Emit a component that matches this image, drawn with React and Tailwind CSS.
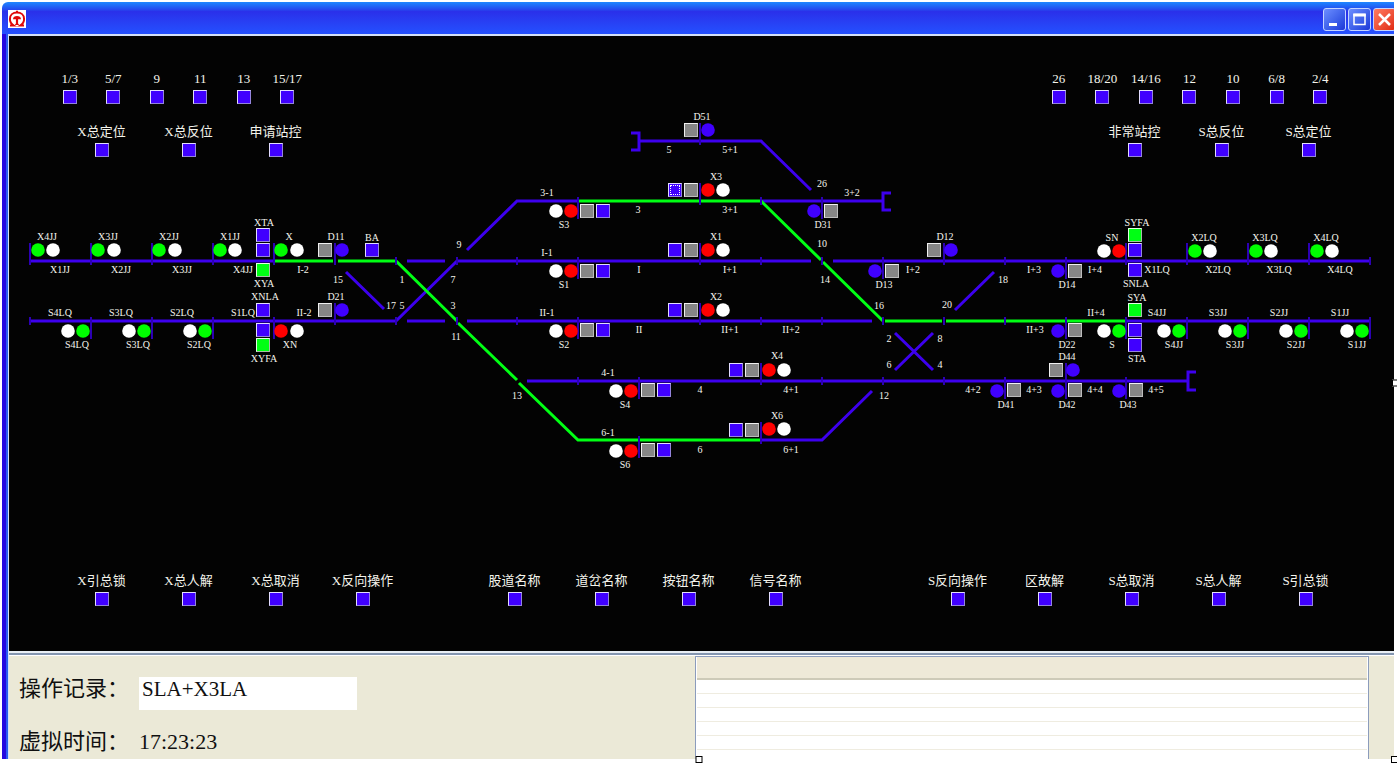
import React from "react";

const ORIGIN = { x: 9, y: 36 };
const place = (x, y) => ({ left: x - ORIGIN.x, top: y - ORIGIN.y });

const BLUE = "#3d00ee";
const GREEN = "#00ff14";

const LAMP = { g: "#00ff00", w: "#ffffff", r: "#ff0000", b: "#4000ff" };

const BUTTON_TONE = {
  blue: "bg-[#4000ff] border-t-[#e2dcff] border-l-[#e2dcff] border-r-[#9484dc] border-b-[#9484dc]",
  gray: "bg-[#868686] border-t-[#f0f0f0] border-l-[#f0f0f0] border-r-[#bcbcbc] border-b-[#bcbcbc]",
  green: "bg-[#00ff14] border-t-[#e4ffe4] border-l-[#e4ffe4] border-r-[#a8bca8] border-b-[#a8bca8]",
};

const blueTracks = [
  "M640 141H761L811 190",
  "M631 133H639V150H631",
  "M467 250L517 201H578",
  "M762 201H883",
  "M891 193H883V210H891",
  "M30 261H274",
  "M407 261H445",
  "M396 321L457 261H811",
  "M833 261H1370",
  "M346 272L384 309",
  "M30 321H396",
  "M407 321H445",
  "M467 321H872",
  "M1127 321H1370",
  "M527 381H1188",
  "M1196 372H1188V390H1196",
  "M761 440H822L872 391",
  "M895 333L933 370",
  "M895 370L933 333",
  "M955 310L994 272",
];

const greenTracks = [
  "M579 201H761L821 260",
  "M823 262L883 321",
  "M275 261H333",
  "M338 261H396L457 321",
  "M458 323L517 380",
  "M519 383L578 440H761",
  "M885 321H942",
  "M946 321H1126",
];

const range = (y, xs, from, to) => xs.map((x) => [x, y + from, y + to]);
const UP = [-18, 4];
const DOWN = [-4, 18];
const SHORT = [-4, 4];
const joints = [
  ...range(141, [700], ...UP),
  ...range(201, [700], ...UP),
  ...range(201, [578, 822], ...DOWN),
  ...range(201, [761], ...SHORT),
  ...range(261, [30, 91, 152, 213, 274, 335, 700, 944, 1126, 1187, 1248, 1309], ...UP),
  ...range(261, [578, 883, 1066], ...DOWN),
  ...range(261, [396, 457, 517, 761, 822, 1005, 1370], ...SHORT),
  ...range(321, [335, 700], ...UP),
  ...range(321, [91, 152, 213, 274, 578, 1066, 1126, 1187, 1248, 1309, 1370], ...DOWN),
  ...range(321, [30, 396, 457, 517, 761, 822, 883, 944, 1005], ...SHORT),
  ...range(381, [761, 1066], ...UP),
  ...range(381, [639, 1005, 1066, 1126], ...DOWN),
  ...range(381, [578, 822, 883, 944], ...SHORT),
  ...range(440, [639], ...DOWN),
  ...range(440, [761], ...UP),
];

const lamps = [
  [38, 250, "g"], [53, 250, "w"], [98, 250, "g"], [114, 250, "w"],
  [159, 250, "g"], [175, 250, "w"], [220, 250, "g"], [235, 250, "w"],
  [281, 250, "g"], [297, 250, "w"], [342, 250, "b"], [342, 310, "b"],
  [68, 331, "w"], [83, 331, "g"], [129, 331, "w"], [144, 331, "g"],
  [190, 331, "w"], [205, 331, "g"], [281, 331, "r"], [297, 331, "w"],
  [556, 211, "w"], [571, 211, "r"], [556, 271, "w"], [571, 271, "r"],
  [556, 331, "w"], [571, 331, "r"], [616, 391, "w"], [631, 391, "r"],
  [616, 451, "w"], [631, 451, "r"], [708, 130, "b"],
  [708, 190, "r"], [723, 190, "w"], [708, 250, "r"], [723, 250, "w"],
  [708, 310, "r"], [723, 310, "w"], [769, 370, "r"], [784, 370, "w"],
  [769, 429, "r"], [784, 429, "w"], [814, 211, "b"], [875, 271, "b"],
  [951, 250, "b"], [1058, 271, "b"], [1058, 331, "b"], [1073, 370, "b"],
  [997, 391, "b"], [1058, 391, "b"], [1119, 391, "b"],
  [1104, 251, "w"], [1119, 251, "r"], [1104, 331, "w"], [1119, 331, "g"],
  [1195, 251, "g"], [1210, 251, "w"], [1256, 251, "g"], [1271, 251, "w"],
  [1317, 251, "g"], [1332, 251, "w"],
  [1164, 331, "w"], [1179, 331, "g"], [1225, 331, "w"], [1240, 331, "g"],
  [1286, 331, "w"], [1301, 331, "g"], [1347, 331, "w"], [1362, 331, "g"],
];

const nodeButtons = [
  [263, 235, "blue", "XTA"], [263, 250, "blue", "XLA"], [263, 270, "green", "XYA"],
  [263, 310, "blue", "XNLA"], [263, 330, "blue", "XNTA"], [263, 345, "green", "XYFA"],
  [325, 250, "gray", "D11"], [325, 310, "gray", "D21"], [372, 250, "blue", "BA"],
  [587, 211, "gray", "S3 D"], [603, 211, "blue", "S3"], [587, 271, "gray", "S1 D"], [603, 271, "blue", "S1"],
  [587, 330, "gray", "S2 D"], [603, 330, "blue", "S2"], [648, 390, "gray", "S4 D"], [664, 390, "blue", "S4"],
  [648, 450, "gray", "S6 D"], [664, 450, "blue", "S6"],
  [691, 130, "gray", "D51"],
  [675, 190, "blue", "X3", true], [691, 190, "gray", "X3 D"], [675, 250, "blue", "X1"], [691, 250, "gray", "X1 D"],
  [675, 310, "blue", "X2"], [691, 310, "gray", "X2 D"], [736, 370, "blue", "X4"], [752, 370, "gray", "X4 D"],
  [736, 430, "blue", "X6"], [752, 430, "gray", "X6 D"],
  [831, 211, "gray", "D31"], [892, 271, "gray", "D13"], [934, 250, "gray", "D12"],
  [1075, 271, "gray", "D14"], [1075, 330, "gray", "D22"], [1056, 370, "gray", "D44"],
  [1014, 390, "gray", "D41"], [1075, 390, "gray", "D42"], [1136, 390, "gray", "D43"],
  [1135, 235, "green", "SYFA"], [1135, 250, "blue", "SNTA"], [1135, 270, "blue", "SNLA"],
  [1135, 310, "green", "SYA"], [1135, 330, "blue", "SLA"], [1135, 345, "blue", "STA"],
];

const labels = [
  ["X4JJ", 47, 237], ["X3JJ", 108, 237], ["X2JJ", 169, 237], ["X1JJ", 230, 237],
  ["X1JJ", 60, 270], ["X2JJ", 121, 270], ["X3JJ", 182, 270], ["X4JJ", 243, 270],
  ["XTA", 264, 223], ["X", 289, 237], ["D11", 336, 237], ["BA", 372, 238],
  ["XYA", 264, 284], ["I-2", 303, 270], ["XNLA", 265, 297], ["D21", 336, 297],
  ["S4LQ", 60, 313], ["S3LQ", 121, 313], ["S2LQ", 182, 313], ["S1LQ", 243, 313],
  ["II-2", 304, 313], ["S4LQ", 77, 345], ["S3LQ", 138, 345], ["S2LQ", 199, 345],
  ["XN", 290, 345], ["XYFA", 264, 359],
  ["15", 338, 280], ["1", 402, 280], ["17", 391, 306], ["5", 402, 306],
  ["7", 453, 280], ["3", 453, 306], ["9", 459, 245], ["11", 456, 337], ["13", 517, 396],
  ["3-1", 547, 193], ["S3", 564, 225], ["3", 638, 210], ["I-1", 547, 253], ["S1", 564, 285], ["I", 639, 270],
  ["II-1", 547, 313], ["S2", 564, 345], ["II", 639, 330], ["4-1", 608, 373], ["S4", 625, 405],
  ["6-1", 608, 433], ["S6", 625, 465], ["4", 700, 390], ["6", 700, 450],
  ["D51", 702, 117], ["5", 669, 150], ["5+1", 730, 150], ["X3", 716, 177], ["3+1", 730, 210],
  ["X1", 716, 237], ["I+1", 730, 270], ["X2", 716, 297], ["II+1", 730, 330], ["II+2", 791, 330],
  ["X4", 777, 356], ["4+1", 791, 390], ["X6", 777, 416], ["6+1", 791, 450],
  ["26", 822, 184], ["3+2", 852, 193], ["D31", 823, 225], ["10", 822, 244], ["14", 825, 280],
  ["D13", 884, 285], ["I+2", 913, 270], ["D12", 945, 237], ["16", 879, 306], ["20", 947, 305],
  ["18", 1003, 280], ["2", 889, 339], ["8", 940, 339], ["6", 889, 365], ["4", 940, 365], ["12", 884, 396],
  ["I+3", 1034, 270], ["D14", 1067, 285], ["I+4", 1095, 270], ["SN", 1112, 238], ["SYFA", 1137, 223],
  ["SNLA", 1136, 284], ["SYA", 1137, 298], ["II+3", 1035, 330], ["D22", 1067, 345], ["D44", 1067, 357],
  ["II+4", 1096, 313], ["S", 1112, 345], ["STA", 1137, 359],
  ["4+2", 973, 390], ["D41", 1006, 405], ["4+3", 1034, 390], ["D42", 1067, 405], ["4+4", 1095, 390],
  ["D43", 1128, 405], ["4+5", 1156, 390],
  ["X1LQ", 1157, 270], ["X2LQ", 1218, 270], ["X3LQ", 1279, 270], ["X4LQ", 1340, 270],
  ["X2LQ", 1204, 238], ["X3LQ", 1265, 238], ["X4LQ", 1326, 238],
  ["S4JJ", 1157, 313], ["S3JJ", 1218, 313], ["S2JJ", 1279, 313], ["S1JJ", 1340, 313],
  ["S4JJ", 1174, 345], ["S3JJ", 1235, 345], ["S2JJ", 1296, 345], ["S1JJ", 1357, 345],
];

function SquareButton({ tone = "blue", focused = false, className = "", ...props }) {
  return (
    <button
      type="button"
      className={`block size-[14px] shrink-0 border p-px ${BUTTON_TONE[tone]} ${className}`}
      {...props}
    >
      {focused && <span className="block size-full border border-dotted border-white" />}
    </button>
  );
}

function StationDiagram() {
  return (
    <div className="absolute inset-0 overflow-hidden">
      <svg
        className="pointer-events-none block"
        width="1385"
        height="615"
        viewBox="9 36 1385 615"
        fill="none"
        aria-hidden="true"
      >
        <path d={blueTracks.join("")} stroke={BLUE} strokeWidth="3" />
        <path d={greenTracks.join("")} stroke={GREEN} strokeWidth="3" />
        {joints.map(([x, from, to], i) => (
          <path key={i} d={`M${x} ${from}V${to}`} stroke="#2c00b4" strokeWidth="2" />
        ))}
        {lamps.map(([x, y, color], i) => (
          <circle key={i} cx={x} cy={y} r="6.8" fill={LAMP[color]} />
        ))}
      </svg>
      {labels.map(([text, x, y], i) => (
        <span
          key={i}
          className="absolute -translate-x-1/2 -translate-y-1/2 text-[10px] leading-[12px] whitespace-nowrap text-[#f4f4ec]"
          style={place(x, y)}
        >
          {text}
        </span>
      ))}
      {nodeButtons.map(([x, y, tone, name, focused], i) => (
        <SquareButton
          key={i}
          tone={tone}
          focused={focused}
          aria-label={name}
          className="absolute -translate-x-1/2 -translate-y-1/2"
          style={place(x, y)}
        />
      ))}
    </div>
  );
}

function ButtonGroup({ items, className }) {
  return (
    <div className={`relative z-10 grid ${className}`}>
      {items.map((text) => (
        <div key={text} className="flex flex-col items-center gap-1">
          <label
            htmlFor={`key-${text}`}
            className="text-[13px] leading-[14px] whitespace-nowrap text-[#f4f4ec]"
          >
            {text}
          </label>
          <SquareButton id={`key-${text}`} />
        </div>
      ))}
    </div>
  );
}

function TitleBar() {
  const frame =
    "flex size-[23px] items-center justify-center rounded-[3px] border border-[#c4d4ff] bg-linear-to-br";
  return (
    <header className="flex h-[32px] items-center justify-between overflow-hidden rounded-tl-[6px] bg-linear-to-b from-[#1f86ff] via-[#2a30ea] via-30% to-[#2450ff] pt-[2px] pl-[6px]">
      <svg width="18" height="18" viewBox="0 0 18 18" aria-hidden="true">
        <rect width="18" height="18" fill="#fff" />
        <path
          d="M2 15.500H5.800C3.200 13.800 1.900 11.300 1.900 8.900C1.900 5 5 2.500 9 2.500S16.100 5 16.100 8.900C16.100 11.300 14.800 13.800 12.200 15.500H16"
          fill="none"
          stroke="#e00808"
          strokeWidth="2"
        />
        <path
          d="M8 0.800h2v2H8zM5 9.300C5 7 6.800 6 9 6S13 7 13 9.300H10.100V13.500L11.200 15H6.800L7.900 13.500V9.300z"
          fill="#e00808"
        />
      </svg>
      <div className="-mr-[2px] flex gap-[2px]">
        <button type="button" aria-label="最小化" className={`${frame} from-[#6d8dff] to-[#1f35d8]`}>
          <svg width="17" height="17" viewBox="0 0 17 17" aria-hidden="true">
            <path d="M3 12h8v3H3z" fill="#fff" />
          </svg>
        </button>
        <button type="button" aria-label="最大化" className={`${frame} from-[#6d8dff] to-[#1f35d8]`}>
          <svg width="17" height="17" viewBox="0 0 17 17" aria-hidden="true">
            <path d="M3 3.500h11v10H3z" fill="none" stroke="#fff" strokeWidth="1.500" />
            <path d="M2.300 2.500h12.400v3H2.300z" fill="#fff" />
          </svg>
        </button>
        <button type="button" aria-label="关闭" className={`${frame} from-[#ff7a60] to-[#e02408]`}>
          <svg width="17" height="17" viewBox="0 0 17 17" aria-hidden="true">
            <path d="M3 3L14 14M14 3L3 14" stroke="#fff" strokeWidth="2.500" />
          </svg>
        </button>
      </div>
    </header>
  );
}

function ControlPanel() {
  return (
    <main className="relative bg-[#030303] pt-[36px] pb-[45px]">
      <StationDiagram />
      <div className="flex justify-between pr-[52px] pl-[39px]">
        <ButtonGroup className="w-[261px] grid-cols-6" items={["1/3", "5/7", "9", "11", "13", "15/17"]} />
        <ButtonGroup
          className="w-[305px] grid-cols-7"
          items={["26", "18/20", "14/16", "12", "10", "6/8", "2/4"]}
        />
      </div>
      <div className="mt-[21px] flex justify-between pr-[42px] pl-[49px]">
        <ButtonGroup className="w-[261px] grid-cols-3" items={["X总定位", "X总反位", "申请站控"]} />
        <ButtonGroup className="w-[261px] grid-cols-3" items={["非常站控", "S总反位", "S总定位"]} />
      </div>
      <div className="mt-[417px] flex pr-[45px] pl-[49px]">
        <ButtonGroup className="w-[348px] grid-cols-4" items={["X引总锁", "X总人解", "X总取消", "X反向操作"]} />
        <ButtonGroup
          className="ml-[65px] w-[348px] grid-cols-4"
          items={["股道名称", "道岔名称", "按钮名称", "信号名称"]}
        />
        <ButtonGroup
          className="ml-auto w-[435px] grid-cols-5"
          items={["S反向操作", "区故解", "S总取消", "S总人解", "S引总锁"]}
        />
      </div>
    </main>
  );
}

function StatusArea() {
  return (
    <footer className="flex border-t border-white bg-[#ebe9d7]">
      <div className="flex w-[49.5%] shrink-0 flex-col gap-[20px] pt-[21px] pl-[10px] text-[#101010]">
        <div className="flex h-[33px]">
          <label htmlFor="record" className="w-[120px] text-[22px] leading-[24px] whitespace-nowrap">
            操作记录：
          </label>
          <input
            id="record"
            type="text"
            defaultValue="SLA+X3LA"
            className="h-full w-[218px] bg-white px-[3px] pb-[9px] text-[21px] leading-[24px] outline-none"
          />
        </div>
        <div className="flex h-[29px] text-[22px] leading-[24px]">
          <span className="w-[120px] whitespace-nowrap">虚拟时间：</span>
          <time>17:23:23</time>
        </div>
      </div>
      <div className="mr-[25px] flex-1 border border-b-0 border-[#8c9cbc] bg-white px-px">
        <table className="w-full table-fixed border-collapse" aria-label="操作记录">
          <thead>
            <tr className="h-[22px] border-b-2 border-[#cdcab8] bg-[#eee9d8]">
              <th />
            </tr>
          </thead>
          <tbody>
            {[0, 1, 2, 3, 4].map((row) => (
              <tr key={row} className="h-[14px] border-b border-[#efece0]">
                <td />
              </tr>
            ))}
          </tbody>
        </table>
      </div>
    </footer>
  );
}

export default function App() {
  const handle = "absolute size-[7px] border border-black bg-white";
  return (
    <div className="relative bg-white pt-[2px] pr-[3px] pb-[7px] pl-[2px] font-['Liberation_Serif','Noto_Sans_CJK_SC',serif]">
      <div className="overflow-hidden">
        <TitleBar />
        <div className="border-l-4 border-[#2408e0]">
          <div className="border-l-2 border-[#2a5cf0]">
            <div className="border-t-2 border-l border-[#d4e0f8]">
              <ControlPanel />
              <div className="h-[4px] border-t border-b-2 border-t-[#e8eef4] border-b-[#8496b0] bg-[#e8eef4]" />
              <StatusArea />
            </div>
          </div>
        </div>
      </div>
      <span className={`${handle} top-1/2 -right-[2px] -translate-y-1/2`} />
      <span className={`${handle} bottom-[3px] left-1/2 -translate-x-1/2`} />
      <span className={`${handle} -right-px bottom-[3px]`} />
    </div>
  );
}
